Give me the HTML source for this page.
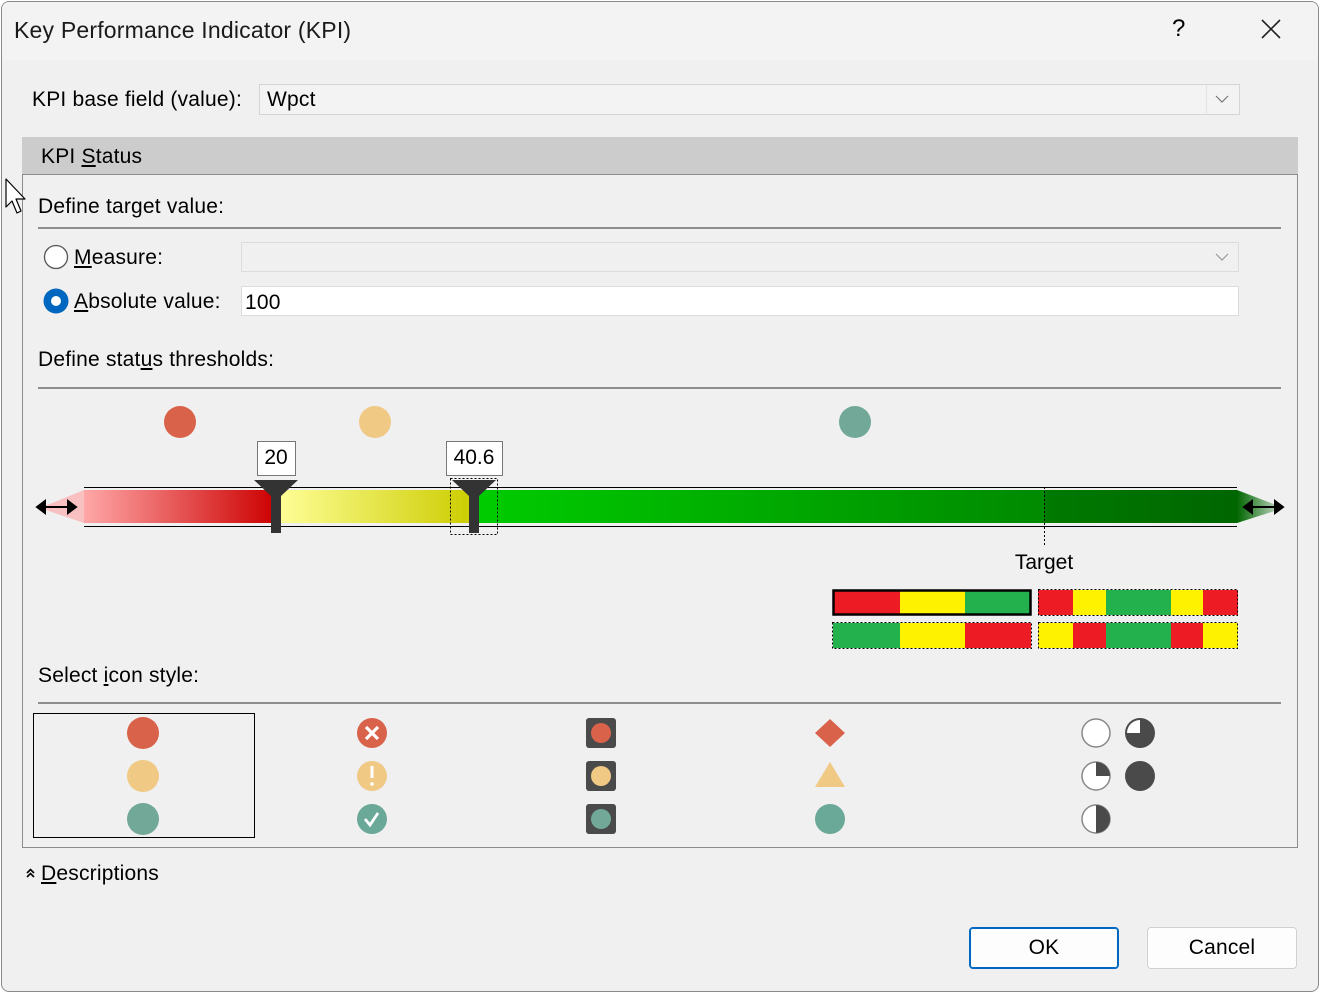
<!DOCTYPE html>
<html><head><meta charset="utf-8"><style>
*{margin:0;padding:0;box-sizing:border-box}
body{width:1320px;height:995px;background:#fff;position:relative;overflow:hidden;font-family:"Liberation Sans",sans-serif;color:#000}
.win{position:absolute;left:1px;top:1px;width:1318px;height:991px;background:#f0f0f0;border:1px solid #8a8a8a;border-radius:8px;overflow:hidden}
.t{position:absolute;font-size:21px;white-space:nowrap;line-height:1;letter-spacing:0.2px}
.box{position:absolute;border:1px solid #d0d0d0}
.hr{position:absolute;height:2px;background:#8e8e8e;left:38px;width:1243px}
u{text-decoration:underline;text-underline-offset:2px}
</style></head><body>
<div class="win">
<div style="position:absolute;left:0;top:0;width:1318px;height:58px;background:#f3f3f3"></div>
</div>
<div class="t" style="left:14px;top:19px;font-size:23px;color:#1a1a1a">Key Performance Indicator (KPI)</div>
<div class="t" style="left:1172px;top:17px;font-size:24px">?</div>
<svg style="position:absolute;left:1261px;top:19px" width="20" height="20"><path d="M1 1L19 19M19 1L1 19" stroke="#222" stroke-width="1.6"/></svg>

<div class="t" style="left:32px;top:89px">KPI base field (value):</div>
<div class="box" style="left:259px;top:84px;width:981px;height:31px;background:#f3f3f3;border-color:#d5d5d5"></div>
<div class="t" style="left:267px;top:89px">Wpct</div>
<div style="position:absolute;left:1206px;top:85px;width:1px;height:29px;background:#e2e2e2"></div>
<svg style="position:absolute;left:1215px;top:94px" width="14" height="10"><path d="M1 2L7 8L13 2" fill="none" stroke="#777" stroke-width="1.2"/></svg>

<div style="position:absolute;left:22px;top:137px;width:1276px;height:38px;background:#cccccc"></div>
<div class="t" style="left:41px;top:146px">KPI <u>S</u>tatus</div>
<div style="position:absolute;left:22px;top:174px;width:1276px;height:674px;border:1px solid #8c8c8c;border-top:none"></div>
<div style="position:absolute;left:22px;top:174px;width:1276px;height:1px;background:#8c8c8c"></div>

<svg style="position:absolute;left:4px;top:177px" width="28" height="40"><path d="M2 2L2 30L8 24L13 36L17 34L12 22L21 22Z" fill="#fff" stroke="#000" stroke-width="1.2" stroke-linejoin="round"/></svg>

<div class="t" style="left:38px;top:196px">Define target value:</div>
<div class="hr" style="top:227px"></div>

<svg style="position:absolute;left:43px;top:244px" width="26" height="26"><circle cx="13" cy="13" r="11.5" fill="#fff" stroke="#555" stroke-width="1.3"/></svg>
<div class="t" style="left:74px;top:247px"><u>M</u>easure:</div>
<div class="box" style="left:241px;top:242px;width:998px;height:30px;background:#f0f0f0;border-color:#dcdcdc"></div>
<svg style="position:absolute;left:1215px;top:252px" width="14" height="10"><path d="M1 2L7 8L13 2" fill="none" stroke="#999" stroke-width="1.2"/></svg>

<svg style="position:absolute;left:43px;top:288px" width="26" height="26"><circle cx="13" cy="13" r="12.5" fill="#0067c0"/><circle cx="13" cy="13" r="5" fill="#fff"/></svg>
<div class="t" style="left:74px;top:291px"><u>A</u>bsolute value:</div>
<div class="box" style="left:241px;top:286px;width:998px;height:30px;background:#fff;border-color:#dcdcdc"></div>
<div class="t" style="left:245px;top:292px">100</div>

<div class="t" style="left:38px;top:349px">Define stat<u>u</u>s thresholds:</div>
<div class="hr" style="top:387px"></div>

<svg style="position:absolute;left:0;top:395px" width="1320" height="265">
<defs>
<linearGradient id="gr" x1="0" x2="1"><stop offset="0" stop-color="#ffa7a7"/><stop offset="1" stop-color="#cc0000"/></linearGradient>
<linearGradient id="gy" x1="0" x2="1"><stop offset="0" stop-color="#ffff99"/><stop offset="1" stop-color="#cccc00"/></linearGradient>
<linearGradient id="gg" x1="0" x2="1"><stop offset="0" stop-color="#00cc00"/><stop offset="1" stop-color="#008a00"/></linearGradient>
<linearGradient id="gg2" x1="0" x2="1"><stop offset="0" stop-color="#007a00"/><stop offset="1" stop-color="#006600"/></linearGradient>
<linearGradient id="gt" x1="0" x2="1"><stop offset="0" stop-color="#006600"/><stop offset="1" stop-color="#006600" stop-opacity="0.1"/></linearGradient>
</defs>
<circle cx="180" cy="27" r="16" fill="#d9634a"/>
<circle cx="375" cy="27" r="16" fill="#f0c985"/>
<circle cx="855" cy="27" r="16" fill="#72a898"/>
<line x1="84" y1="92.5" x2="1237" y2="92.5" stroke="#000"/>
<line x1="84" y1="131.5" x2="1237" y2="131.5" stroke="#000"/>
<polygon points="40,113 84,95 84,128" fill="#f8c0c0"/>
<rect x="84" y="95" width="192" height="33" fill="url(#gr)"/>
<rect x="276" y="95" width="198" height="33" fill="url(#gy)"/>
<rect x="474" y="95" width="570" height="33" fill="url(#gg)"/>
<rect x="1044" y="95" width="193" height="33" fill="url(#gg2)"/>
<polygon points="1237,95 1284,113 1237,128" fill="url(#gt)"/>
<path d="M37 112H76M37 112l8-6v12zM76 112l-8-6v12z" stroke="#000" stroke-width="2" fill="#000"/>
<path d="M1244 112H1283M1244 112l8-6v12zM1283 112l-8-6v12z" stroke="#000" stroke-width="2" fill="#000"/>
<line x1="1044.5" y1="92" x2="1044.5" y2="150" stroke="#000" stroke-dasharray="2,2"/>
<rect x="257.5" y="46.5" width="38" height="34" fill="#fff" stroke="#777"/>
<text x="276" y="69" font-size="21" text-anchor="middle" font-family="Liberation Sans">20</text>
<rect x="446.5" y="46.5" width="56" height="34" fill="#fff" stroke="#777"/>
<text x="474" y="69" font-size="21" text-anchor="middle" font-family="Liberation Sans">40.6</text>
<path d="M254 85H298L281 101V138H271V101Z" fill="#333"/>
<path d="M452 85H496L479 101V138H469V101Z" fill="#333"/>
<rect x="450.5" y="83.5" width="47" height="56" fill="none" stroke="#000" stroke-dasharray="2,2"/>
<text x="1044" y="174" font-size="21" text-anchor="middle" font-family="Liberation Sans">Target</text>
<g>
<rect x="833" y="195" width="67" height="25" fill="#ed1c24"/><rect x="900" y="195" width="65" height="25" fill="#fff200"/><rect x="965" y="195" width="66" height="25" fill="#22b14c"/>
<rect x="833.5" y="195.5" width="197" height="24" fill="none" stroke="#000" stroke-width="2.5"/>
<rect x="1038" y="195" width="35" height="25" fill="#ed1c24"/><rect x="1073" y="195" width="33" height="25" fill="#fff200"/><rect x="1106" y="195" width="65" height="25" fill="#22b14c"/><rect x="1171" y="195" width="32" height="25" fill="#fff200"/><rect x="1203" y="195" width="35" height="25" fill="#ed1c24"/>
<rect x="1038.5" y="194.5" width="199" height="26" fill="none" stroke="#000" stroke-dasharray="2,2"/>
<rect x="833" y="228" width="67" height="25" fill="#22b14c"/><rect x="900" y="228" width="65" height="25" fill="#fff200"/><rect x="965" y="228" width="66" height="25" fill="#ed1c24"/>
<rect x="832.5" y="227.5" width="199" height="26" fill="none" stroke="#000" stroke-dasharray="2,2"/>
<rect x="1038" y="228" width="35" height="25" fill="#fff200"/><rect x="1073" y="228" width="33" height="25" fill="#ed1c24"/><rect x="1106" y="228" width="65" height="25" fill="#22b14c"/><rect x="1171" y="228" width="32" height="25" fill="#ed1c24"/><rect x="1203" y="228" width="35" height="25" fill="#fff200"/>
<rect x="1038.5" y="227.5" width="199" height="26" fill="none" stroke="#000" stroke-dasharray="2,2"/>
</g>
</svg>

<div class="t" style="left:38px;top:665px">Select <u>i</u>con style:</div>
<div class="hr" style="top:702px"></div>
<div style="position:absolute;left:33px;top:713px;width:222px;height:125px;border:1px solid #000"></div>

<svg style="position:absolute;left:0;top:710px" width="1320" height="130">
<circle cx="143" cy="23" r="16" fill="#d9634a"/><circle cx="143" cy="66" r="16" fill="#f0c985"/><circle cx="143" cy="109" r="16" fill="#72a898"/>
<circle cx="372" cy="23" r="15" fill="#d9634a"/><path d="M366 17l12 12M378 17l-12 12" stroke="#fff" stroke-width="3.2"/>
<circle cx="372" cy="66" r="15" fill="#f0c985"/><path d="M372 56v12" stroke="#fff" stroke-width="3"/><circle cx="372" cy="74" r="1.8" fill="#fff"/>
<circle cx="372" cy="109" r="15" fill="#6aa897"/><path d="M365 109l5 6 8-12" fill="none" stroke="#fff" stroke-width="2.8"/>
<rect x="586" y="8" width="30" height="30" rx="3" fill="#4a4a4a"/><circle cx="601" cy="23" r="10" fill="#d9634a"/>
<rect x="586" y="51" width="30" height="30" rx="3" fill="#4a4a4a"/><circle cx="601" cy="66" r="10" fill="#f0c985"/>
<rect x="586" y="94" width="30" height="30" rx="3" fill="#4a4a4a"/><circle cx="601" cy="109" r="10" fill="#72a898"/>
<path d="M830 9L845 23L830 37L815 23Z" fill="#d9634a"/>
<path d="M830 52L845 77H815Z" fill="#f0c985"/>
<circle cx="830" cy="109" r="15" fill="#6aa897"/>
<circle cx="1096" cy="23" r="14" fill="#fff" stroke="#888" stroke-width="1.5"/>
<circle cx="1140" cy="23" r="15" fill="#4a4a4a"/><path d="M1140 23V10A13 13 0 0 0 1127 23Z" fill="#fff"/>
<circle cx="1096" cy="66" r="14" fill="#fff" stroke="#888" stroke-width="1.5"/><path d="M1096 66V52A14 14 0 0 1 1110 66Z" fill="#4a4a4a"/>
<circle cx="1140" cy="66" r="15" fill="#4a4a4a"/>
<circle cx="1096" cy="109" r="14" fill="#fff" stroke="#888" stroke-width="1.5"/><path d="M1096 95A14 14 0 0 1 1096 123Z" fill="#4a4a4a"/>
</svg>

<svg style="position:absolute;left:26px;top:867px" width="10" height="12"><path d="M1 6L4.5 2.5L8 6M1 10L4.5 6.5L8 10" fill="none" stroke="#000" stroke-width="1.6"/></svg>
<div class="t" style="left:41px;top:863px"><u>D</u>escriptions</div>

<div style="position:absolute;left:969px;top:927px;width:150px;height:42px;background:#fdfdfd;border:1px solid #0067c0;border-radius:4px;box-shadow:inset 0 0 0 1px #0067c0"></div>
<div class="t" style="left:969px;top:937px;width:150px;text-align:center">OK</div>
<div style="position:absolute;left:1147px;top:927px;width:150px;height:42px;background:#fdfdfd;border:1px solid #d0d0d0;border-radius:4px"></div>
<div class="t" style="left:1147px;top:937px;width:150px;text-align:center">Cancel</div>
</body></html>
